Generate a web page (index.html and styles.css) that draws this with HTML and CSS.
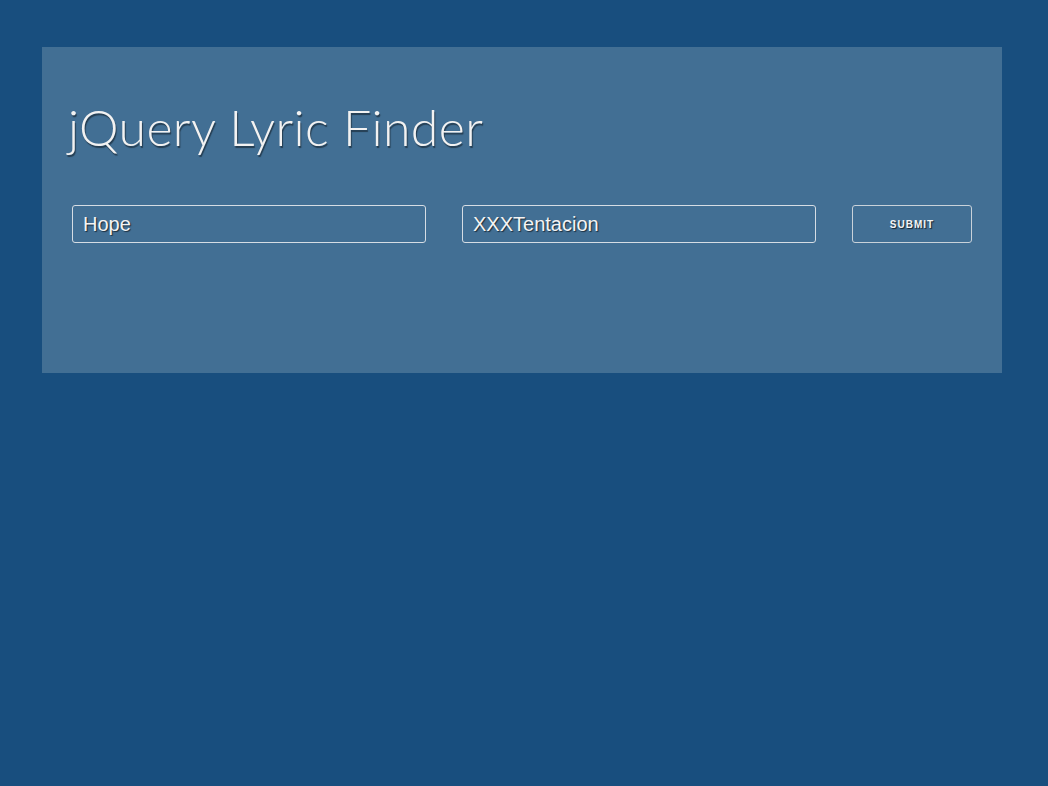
FILE: index.html
```html
<!DOCTYPE html>
<html>
<head>
<meta charset="utf-8">
<link rel="stylesheet" href="styles.css">
<title>jQuery Lyric Finder</title>
</head>
<body>
<div class="panel">
  <h1 class="title">jQuery Lyric Finder</h1>
  <form class="row">
    <input class="field" type="text" value="Hope">
    <input class="field" type="text" value="XXXTentacion">
    <button class="submit" type="button">Submit</button>
  </form>
</div>
</body>
</html>
```
FILE: styles.css
```css
html, body {
  margin: 0;
  padding: 0;
  background: #184e7e;
  height: 100%;
}
body {
  padding: 47px 46px 0 42px;
  box-sizing: border-box;
  font-family: "Liberation Sans", Arial, sans-serif;
}
.panel {
  width: 960px;
  height: 326px;
  box-sizing: border-box;
  background: #426f94;
  padding: 50px 30px 30px 30px;
}
.title {
  margin: 0 0 0 -4px;
  font-family: Lato, "Open Sans", sans-serif;
  font-weight: 300;
  font-size: 50px;
  line-height: 60px;
  color: #f2f2f2;
  text-shadow: 1px 2px 1px rgba(0, 0, 0, 0.45);
  letter-spacing: 0.4px;
}
.row {
  display: flex;
  gap: 36px;
  margin-top: 48px;
}
.field {
  width: 354px;
  height: 38px;
  box-sizing: border-box;
  background: transparent;
  border: 1px solid #d6dde4;
  border-radius: 3px;
  padding: 0 10px;
  font-family: "Liberation Sans", Arial, sans-serif;
  font-size: 20px;
  color: #f4f4f4;
  text-shadow: 1px 1px 1px rgba(0, 0, 0, 0.6);
  outline: none;
}
.submit {
  width: 120px;
  height: 38px;
  box-sizing: border-box;
  background: transparent;
  border: 1px solid #c9d2da;
  border-radius: 3px;
  font-family: "Liberation Sans", Arial, sans-serif;
  font-weight: bold;
  font-size: 10px;
  letter-spacing: 1px;
  text-transform: uppercase;
  color: #f4f4f4;
  text-shadow: 1px 1px 1px rgba(0, 0, 0, 0.7);
  cursor: pointer;
}
```
